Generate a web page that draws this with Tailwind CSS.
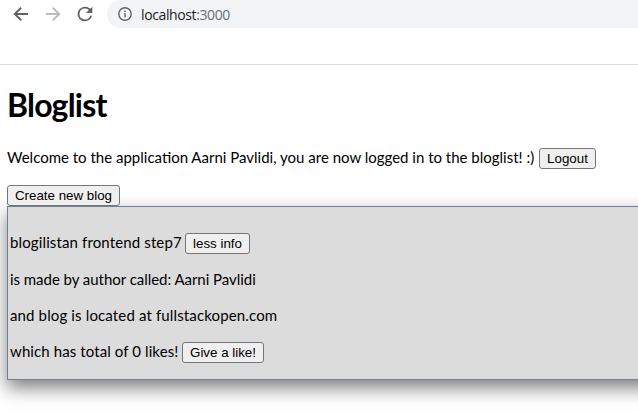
<!DOCTYPE html>
<html lang="en">
<head>
<meta charset="utf-8">
<title>Bloglist</title>
<script src="https://cdn.jsdelivr.net/npm/@tailwindcss/browser@4"></script>
</head>
<body class="w-[638px] h-[417px] overflow-hidden bg-white text-black font-[Lato,sans-serif] text-[15px] leading-[19px]">
<header class="h-[65px] border-b border-[#dadce0]">
  <div class="flex h-7 items-center">
    <svg class="ml-[9px] size-6 shrink-0" viewBox="0 0 24 24" fill="none" stroke="#5f6368" stroke-width="2"><path d="M19 12H6M12.2 5.6L5.8 12l6.4 6.4"/></svg>
    <svg class="ml-2 size-6 shrink-0" viewBox="0 0 24 24" fill="none" stroke="#babcbe" stroke-width="2"><path d="M5 12h13M11.8 5.6l6.4 6.4-6.4 6.4"/></svg>
    <svg class="ml-[9px] size-[22px] shrink-0" viewBox="0 0 24 24" fill="#5f6368"><path d="M17.65 6.35A8 8 0 1 0 19.73 14h-2.08A6 6 0 1 1 12 6c1.66 0 3.14.69 4.22 1.78L13 11h7V4z"/></svg>
    <div class="ml-[11px] flex h-7 flex-1 items-center rounded-l-full bg-[#f1f3f4] pl-[11px]">
      <svg class="size-[14px]" viewBox="0 0 14 14" fill="none" stroke="#5f6368" stroke-width="1.4"><circle cx="7" cy="7" r="6.2"/><path d="M7 6.1v4.2M7 3.5v1.4"/></svg>
      <span class="ml-[9px] font-['Open_Sans',sans-serif] text-[14px] tracking-[-0.39px] text-[#202124]">localhost<span class="text-[#6b6f73]">:3000</span></span>
    </div>
  </div>
</header>
<main class="h-[352px] overflow-hidden pl-[7px]">
  <h1 class="pt-[20px] text-[32px] leading-[40px] font-bold tracking-[-0.8px]">Bloglist</h1>
  <p class="mt-[23px] flex h-[21px] items-center whitespace-nowrap"><span class="w-[532px] pb-[2px]">Welcome to the application Aarni Pavlidi, you are now logged in to the bloglist! :)</span><button class="h-[21px] w-[57px] rounded-[3px] border border-[#767676] bg-[#efefef] font-['Liberation_Sans',sans-serif] text-[13.33px] leading-[19px]">Logout</button></p>
  <button class="relative z-10 mt-[16px] block h-[21px] w-[113px] rounded-[3px] border border-[#767676] bg-[#efefef] font-['Liberation_Sans',sans-serif] text-[13.33px] leading-[19px] whitespace-nowrap">Create new blog</button>
  <section class="-mr-8 h-[174px] border border-[#708090] bg-[#dcdcdc] pt-[26px] pl-[2px] whitespace-nowrap shadow-[0_8px_17px_rgba(0,0,0,0.5)]">
    <p class="flex h-[21px] items-center"><span class="w-[175px] pb-[2px] tracking-[0.13px]">blogilistan frontend step7</span><button class="h-[21px] w-[65px] rounded-[3px] border border-[#767676] bg-[#efefef] font-['Liberation_Sans',sans-serif] text-[13.33px] leading-[19px]">less info</button></p>
    <p class="mt-[16px] tracking-[-0.04px]">is made by author called: Aarni Pavlidi</p>
    <p class="mt-[17px] tracking-[0.14px]">and blog is located at fullstackopen.com</p>
    <p class="mt-[17px] flex h-[21px] items-center"><span class="w-[172px] pb-[2px] tracking-[0.1px]">which has total of 0 likes!</span><button class="h-[21px] w-[82px] rounded-[3px] border border-[#767676] bg-[#efefef] font-['Liberation_Sans',sans-serif] text-[13.33px] leading-[19px]">Give a like!</button></p>
  </section>
</main>
</body>
</html>
